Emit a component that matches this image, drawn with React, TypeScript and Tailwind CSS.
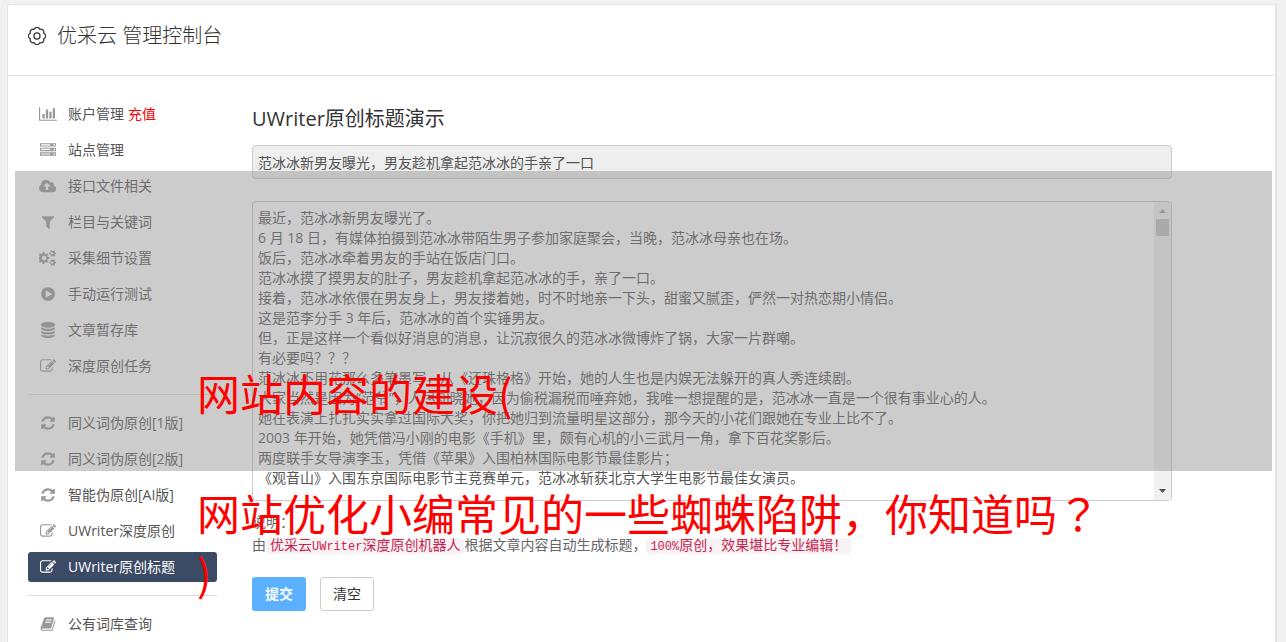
import { clsx } from 'clsx'

// [viewBox width, path], every glyph is 1792 units high
const icons = {
  chart: [2048, 'M640 896v512h-256v-512h256zm384-512v1024h-256v-1024h256zm1024 1152v128h-2048v-1536h128v1408h1920zm-640-896v768h-256v-768h256zm384-384v1152h-256v-1152h256z'],
  server: [1792, 'M128 1408h1024v-128h-1024v128zm0-512h1024v-128h-1024v128zm1568 448q0-40-28-68t-68-28-68 28-28 68 28 68 68 28 68-28 28-68zm-1568-960h1024v-128h-1024v128zm1568 448q0-40-28-68t-68-28-68 28-28 68 28 68 68 28 68-28 28-68zm0-512q0-40-28-68t-68-28-68 28-28 68 28 68 68 28 68-28 28-68zm96 832v384h-1792v-384h1792zm0-512v384h-1792v-384h1792zm0-512v384h-1792v-384h1792z'],
  upload: [1920, 'M1280 928q0-14-9-23l-352-352q-9-9-23-9t-23 9l-351 351q-10 12-10 24 0 14 9 23t23 9h224v352q0 13 9.5 22.5t22.5 9.5h192q13 0 22.5-9.5t9.5-22.5v-352h224q13 0 22.5-9.5t9.5-22.5zm640 288q0 159-112.5 271.5t-271.5 112.5h-1088q-185 0-316.5-131.5t-131.5-316.5q0-130 70-240t188-165q-2-30-2-43 0-212 150-362t362-150q156 0 285.5 87t188.5 231q71-62 166-62 106 0 181 75t75 181q0 76-41 138 130 31 213.5 135.5t83.5 238.5z'],
  filter: [1792, 'M1595 295q17 41-14 70l-493 493v742q0 42-39 59-13 5-25 5-27 0-45-19l-256-256q-19-19-19-45v-486l-493-493q-31-29-14-70 17-39 59-39h1280q42 0 59 39z'],
  cogs: [1920, 'M832 896q0-106-75-181t-181-75-181 75-75 181 75 181 181 75 181-75 75-181zm768 512q0-52-38-90t-90-38-90 38-38 90q0 53 37.5 90.5t90.5 37.5 90.5-37.5 37.5-90.5zm0-1024q0-52-38-90t-90-38-90 38-38 90q0 53 37.5 90.5t90.5 37.5 90.5-37.5 37.5-90.5zm-448 421v185q0 10-7 19.5t-16 10.5l-155 24q-11 35-32 76 34 48 90 115 7 11 7 20 0 12-7 19-23 30-82.5 89.5t-78.5 59.5q-11 0-21-7l-115-90q-37 19-77 31-11 108-23 155-7 24-30 24h-186q-11 0-20-7.5t-10-17.5l-23-153q-34-10-75-31l-118 89q-7 7-20 7-11 0-21-8-144-133-144-160 0-9 7-19 10-14 41-53t47-61q-23-44-35-82l-152-24q-10-1-17-9.5t-7-19.5v-185q0-10 7-19.5t16-10.5l155-24q11-35 32-76-34-48-90-115-7-11-7-20 0-12 7-20 22-30 82-89t79-59q11 0 21 7l115 90q34-18 77-32 11-108 23-154 7-24 30-24h186q11 0 20 7.5t10 17.5l23 153q34 10 75 31l118-89q8-7 20-7 11 0 21 8 144 133 144 160 0 8-7 19-12 16-42 54t-45 60q23 48 34 82l152 23q10 2 17 10.5t7 19.5zm768 533v140q0 16-149 31-12 27-30 52 51 113 51 138 0 4-4 7-122 71-124 71-8 0-46-47t-52-68q-20 2-30 2t-30-2q-14 21-52 68t-46 47q-2 0-124-71-4-3-4-7 0-25 51-138-18-25-30-52-149-15-149-31v-140q0-16 149-31 13-29 30-52-51-113-51-138 0-4 4-7 4-2 35-20t59-34 30-16q8 0 46 46.5t52 67.5q20-2 30-2t30 2q51-71 92-112l6-2q4 0 124 70 4 3 4 7 0 25-51 138 17 23 30 52 149 15 149 31zm0-1024v140q0 16-149 31-12 27-30 52 51 113 51 138 0 4-4 7-122 71-124 71-8 0-46-47t-52-68q-20 2-30 2t-30-2q-14 21-52 68t-46 47q-2 0-124-71-4-3-4-7 0-25 51-138-18-25-30-52-149-15-149-31v-140q0-16 149-31 13-29 30-52-51-113-51-138 0-4 4-7 4-2 35-20t59-34 30-16q8 0 46 46.5t52 67.5q20-2 30-2t30 2q51-71 92-112l6-2q4 0 124 70 4 3 4 7 0 25-51 138 17 23 30 52 149 15 149 31z'],
  play: [1792, 'M896 128q209 0 385.5 103t279.5 279.5 103 385.5-103 385.5-279.5 279.5-385.5 103-385.5-103-279.5-279.5-103-385.5 103-385.5 279.5-279.5 385.5-103zm384 823q32-18 32-55t-32-55l-544-320q-31-19-64-1-32 19-32 56v640q0 37 32 56 16 8 32 8 17 0 32-9z'],
  database: [1792, 'M896 768q237 0 443-43t325-127v170q0 69-103 128t-280 93.5-385 34.5-385-34.5-280-93.5-103-128v-170q119 84 325 127t443 43zm0 768q237 0 443-43t325-127v170q0 69-103 128t-280 93.5-385 34.5-385-34.5-280-93.5-103-128v-170q119 84 325 127t443 43zm0-384q237 0 443-43t325-127v170q0 69-103 128t-280 93.5-385 34.5-385-34.5-280-93.5-103-128v-170q119 84 325 127t443 43zm0-1152q208 0 385 34.5t280 93.5 103 128v128q0 69-103 128t-280 93.5-385 34.5-385-34.5-280-93.5-103-128v-128q0-69 103-128t280-93.5 385-34.5z'],
  edit: [1792, 'M888 1184l116-116-152-152-116 116v56h96v96h56zm440-720q-16-16-33 1l-350 350q-17 17-1 33t33-1l350-350q17-17 1-33zm80 594v190q0 119-84.5 203.5t-203.5 84.5h-832q-119 0-203.5-84.5t-84.5-203.5v-832q0-119 84.5-203.5t203.5-84.5h832q63 0 117 25 15 7 18 23 3 17-9 29l-49 49q-14 14-32 8-23-6-45-6h-832q-66 0-113 47t-47 113v832q0 66 47 113t113 47h832q66 0 113-47t47-113v-126q0-13 9-22l64-64q15-15 35-7t20 29zm-96-738l288 288-672 672h-288v-288zm444 132l-92 92-288-288 92-92q28-28 68-28t68 28l152 152q28 28 28 68t-28 68z'],
  refresh: [1792, 'M1639 1056q0 5-1 7-64 268-268 434.5t-478 166.5q-146 0-282.5-55t-243.5-157l-129 129q-19 19-45 19t-45-19-19-45v-448q0-26 19-45t45-19h448q26 0 45 19t19 45-19 45l-137 137q71 66 161 102t187 36q134 0 250-65t186-179q11-17 53-117 8-23 30-23h192q13 0 22.5 9.5t9.5 22.5zm25-800v448q0 26-19 45t-45 19h-448q-26 0-45-19t-19-45 19-45l138-138q-148-137-349-137-134 0-250 65t-186 179q-11 17-53 117-8 23-30 23h-199q-13 0-22.5-9.5t-9.5-22.5v-7q65-268 270-434.5t480-166.5q146 0 284 55.5t245 156.5l130-129q19-19 45-19t45 19 19 45z'],
  book: [1792, 'M1703 478q40 57 18 129l-275 906q-19 64-76.5 107.5t-122.5 43.5h-923q-77 0-148.5-53.5t-99.5-131.5q-24-67-2-127 0-4 3-27t4-37q1-8-3-21.5t-3-19.5q2-11 8-21t16.5-23.5 16.5-23.5q23-38 45-91.5t30-91.5q3-10 .5-30t-.5-28q3-11 17-28t17-23q21-36 42-92t25-90q1-9-2.5-32t.5-28q4-13 22-30.5t22-22.5q19-26 42.5-84.5t27.5-96.5q1-8-3-25.5t-2-26.5q2-8 9-18t18-23 17-21q8-12 16.5-30.5t15-35 16-36 19.5-32 26.5-23.5 36-11.5 47.5 5.5l-1 3q38-9 51-9h761q74 0 114 56t18 130l-274 906q-36 119-71.5 153.5t-128.5 34.5h-869q-27 0-38 15-11 16-1 43 24 70 144 70h923q29 0 56-15.5t35-41.5l300-987q7-22 5-57 38 15 59 43zm-1064 2q-4 13 2 22.5t20 9.5h608q13 0 25.5-9.5t16.5-22.5l21-64q4-13-2-22.5t-20-9.5h-608q-13 0-25.5 9.5t-16.5 22.5zm-83 256q-4 13 2 22.5t20 9.5h608q13 0 25.5-9.5t16.5-22.5l21-64q4-13-2-22.5t-20-9.5h-608q-13 0-25.5 9.5t-16.5 22.5z'],
} as const

type IconName = keyof typeof icons
type MenuItem = { icon: IconName; label: string; extra?: string; active?: boolean }

const menu: MenuItem[][] = [
  [
    { icon: 'chart', label: '账户管理', extra: '充值' },
    { icon: 'server', label: '站点管理' },
    { icon: 'upload', label: '接口文件相关' },
    { icon: 'filter', label: '栏目与关键词' },
    { icon: 'cogs', label: '采集细节设置' },
    { icon: 'play', label: '手动运行测试' },
    { icon: 'database', label: '文章暂存库' },
    { icon: 'edit', label: '深度原创任务' },
  ],
  [
    { icon: 'refresh', label: '同义词伪原创[1版]' },
    { icon: 'refresh', label: '同义词伪原创[2版]' },
    { icon: 'refresh', label: '智能伪原创[AI版]' },
    { icon: 'edit', label: 'UWriter深度原创' },
    { icon: 'edit', label: 'UWriter原创标题', active: true },
  ],
  [{ icon: 'book', label: '公有词库查询' }],
]

const article = `最近，范冰冰新男友曝光了。
6 月 18 日，有媒体拍摄到范冰冰带陌生男子参加家庭聚会，当晚，范冰冰母亲也在场。
饭后，范冰冰牵着男友的手站在饭店门口。
范冰冰摸了摸男友的肚子，男友趁机拿起范冰冰的手，亲了一口。
接着，范冰冰依偎在男友身上，男友搂着她，时不时地亲一下头，甜蜜又腻歪，俨然一对热恋期小情侣。
这是范李分手 3 年后，范冰冰的首个实锤男友。
但，正是这样一个看似好消息的消息，让沉寂很久的范冰冰微博炸了锅，大家一片群嘲。
有必要吗？？？
范冰冰不用花那么多笔墨写，从《还珠格格》开始，她的人生也是内娱无法躲开的真人秀连续剧。
大家当然是因为“范爷”，人尽知晓她，因为偷税漏税而唾弃她，我唯一想提醒的是，范冰冰一直是一个很有事业心的人。
她在表演上扎扎实实拿过国际大奖，你把她归到流量明星这部分，那今天的小花们跟她在专业上比不了。
2003 年开始，她凭借冯小刚的电影《手机》里，颇有心机的小三武月一角，拿下百花奖影后。
两度联手女导演李玉，凭借《苹果》入围柏林国际电影节最佳影片；
《观音山》入围东京国际电影节主竞赛单元，范冰冰斩获北京大学生电影节最佳女演员。`

function MenuIcon({ name }: { name: IconName }) {
  const [width, path] = icons[name]
  return (
    <span className="flex w-5 shrink-0 justify-center">
      <svg className="h-4 w-auto" viewBox={`0 0 ${width} 1792`} fill="currentColor" aria-hidden="true">
        <path d={path} />
      </svg>
    </span>
  )
}

function Sidebar() {
  return (
    <nav className="w-[189px] shrink-0 divide-y divide-[#ddd]">
      {menu.map((group, i) => (
        <ul key={i} className={clsx('space-y-1.5', i > 0 && 'pt-[13px]', i < menu.length - 1 && 'pb-[13px]')}>
          {group.map(item => (
            <li
              key={item.label}
              className={clsx(
                'flex h-[30px] items-center rounded-[3px] px-2.5',
                item.active ? 'bg-[#3b4a65] text-white' : 'text-[#999]',
              )}
            >
              <a href="#" className="flex items-center gap-2.5">
                <MenuIcon name={item.icon} />
                <span className={clsx(!item.active && 'text-[#555]')}>{item.label}</span>
              </a>
              {item.extra && <a href="#" className="ml-1 text-[#f00]">{item.extra}</a>}
            </li>
          ))}
        </ul>
      ))}
    </nav>
  )
}

function ScrollTrack() {
  return (
    <div className="flex w-[17px] shrink-0 flex-col items-center rounded-r-[3px] bg-[#f1f1f1]" aria-hidden="true">
      <svg className="h-[17px] w-[17px]" viewBox="0 0 17 17" fill="#a3a3a3">
        <path d="M5 11h7L8.5 7z" />
      </svg>
      <div className="h-[17px] w-[13px] bg-[#c1c1c1]" />
      <svg className="mt-auto h-[17px] w-[17px]" viewBox="0 0 17 17" fill="#505050">
        <path d="M5 6h7L8.5 10z" />
      </svg>
    </div>
  )
}

function TitleForm() {
  return (
    <form className="min-w-0 max-w-[920px] flex-1" onSubmit={e => e.preventDefault()}>
      <h2 className="mt-1 text-xl leading-8 text-[#333]">UWriter原创标题演示</h2>
      <input
        aria-label="标题"
        readOnly
        defaultValue="范冰冰新男友曝光，男友趁机拿起范冰冰的手亲了一口"
        className="mt-2.5 h-[34px] w-full rounded-[4px] border border-[#ccc] bg-[#eee] px-[5px] text-[#555] outline-none"
      />
      <div className="mt-[22px] flex rounded-[4px] border border-[#ccc] bg-white">
        <textarea
          aria-label="文章内容"
          rows={14}
          defaultValue={article}
          className="min-w-0 flex-1 resize-none overflow-hidden px-[5px] pt-1.5 pb-3 text-[#555] outline-none"
        />
        <ScrollTrack />
      </div>
      <p className="mt-[9px] leading-[23px] text-[#666]">
        说明：
        <br />
        由
        <code className="rounded-[4px] bg-[#f9f2f4] px-1 font-[Liberation_Mono,Noto_Sans_CJK_SC,monospace] leading-none text-[#c7254e]">
          优采云<span className="text-xs leading-none">UWriter</span>深度原创机器人
        </code>
        根据文章内容自动生成标题，
        <code className="rounded-[4px] bg-[#f9f2f4] px-1 font-[Liberation_Mono,Noto_Sans_CJK_SC,monospace] leading-none text-[#c7254e]">
          <span className="text-xs leading-none">100%</span>原创，效果堪比专业编辑！
        </code>
      </p>
      <div className="mt-[21px] flex gap-3.5">
        <button type="submit" className="h-[34px] w-[54px] rounded-[3px] bg-[#5bb0ff] font-bold text-white">提交</button>
        <button type="reset" className="h-[34px] w-[54px] rounded-[3px] border border-[#ccc] bg-white text-[#333]">清空</button>
      </div>
    </form>
  )
}

export default function App() {
  return (
    <div className="relative flex min-h-screen flex-col overflow-hidden bg-[#f1f1f1] pt-1 pr-[9px] pl-[7px] font-['Open_Sans','Noto_Sans_CJK_SC',sans-serif] text-sm">
      <div className="flex-1 rounded-t-[3px] border border-r-2 border-b-0 border-[#e4e4e4] bg-white">
        <header className="flex h-[71px] items-center gap-[11px] border-b border-[#e4e4e4] px-5 pb-2 text-[#333]">
          <svg className="h-[18px] w-[18px]" viewBox="1 1 22 22" fill="none" stroke="currentColor" strokeWidth="1.5" strokeLinejoin="round" aria-hidden="true">
            <path d="M8.6 3.9a3.6 3.6 0 0 1 6.8 0a3.6 3.6 0 0 1 4.7 4.7a3.6 3.6 0 0 1 0 6.8a3.6 3.6 0 0 1-4.7 4.7a3.6 3.6 0 0 1-6.8 0a3.6 3.6 0 0 1-4.7-4.7a3.6 3.6 0 0 1 0-6.8a3.6 3.6 0 0 1 4.7-4.7z" />
            <circle cx="12" cy="12" r="3.7" />
          </svg>
          <h1 className="text-xl font-light">优采云 管理控制台</h1>
        </header>
        <div className="flex gap-[35px] px-5 pt-[23px]">
          <Sidebar />
          <TitleForm />
        </div>
      </div>

      <div className="pointer-events-none absolute top-[171px] right-[14px] left-[15px] h-[300px] bg-[#8e8e8e]/45" />
      <div className="pointer-events-none absolute top-[362px] left-[197px] font-['Noto_Sans_CJK_SC',sans-serif] text-[43px] leading-[60px] whitespace-pre text-[#f00]">
        {'网站内容的建设(\n\n网站优化小编常见的一些蜘蛛陷阱，你知道吗'}
        <span className="font-['Noto_Sans_CJK_JP',sans-serif]">？</span>
        {'\n)'}
      </div>
    </div>
  )
}
